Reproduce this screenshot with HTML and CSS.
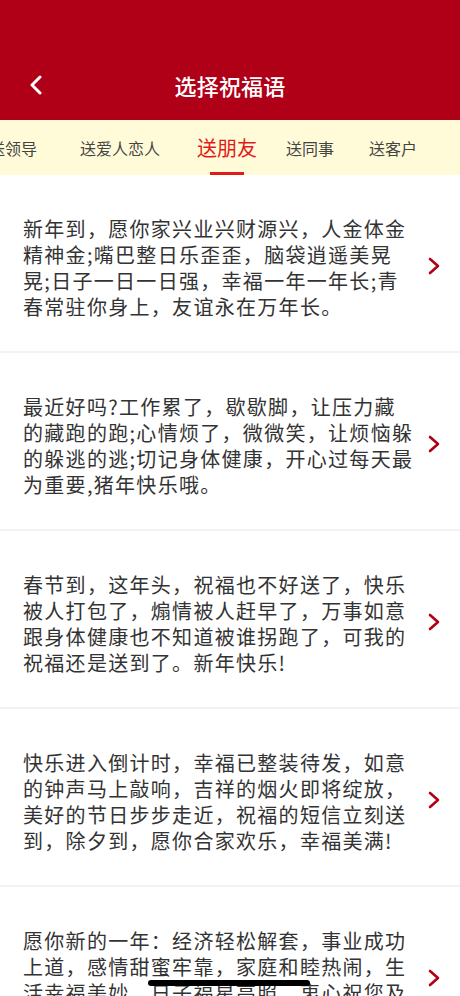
FILE: index.html
```html
<!DOCTYPE html>
<html lang="zh">
<head>
<meta charset="utf-8">
<link rel="stylesheet" href="styles.css">
</head>
<body>
<div class="page">
  <header class="header">
    <div class="nav">
      <svg class="back" width="14" height="20" viewBox="0 0 14 20"><polyline points="11,2 3,10 11,18" fill="none" stroke="#fff" stroke-width="3" stroke-linecap="round" stroke-linejoin="round"/></svg>
      <h1 class="title">选择祝福语</h1>
    </div>
  </header>
  <nav class="tabs">
    <div class="tab-row">
      <span class="tab t1">送领导</span>
      <span class="tab t2">送爱人恋人</span>
      <span class="tab t3 active">送朋友</span>
      <span class="tab t4">送同事</span>
      <span class="tab t5">送客户</span>
    </div>
  </nav>
  <ul class="list">
    <li class="item"><p class="text">新年到，愿你家兴业兴财源兴，人金体金精神金;嘴巴整日乐歪歪，脑袋逍遥美晃晃;日子一日一日强，幸福一年一年长;青春常驻你身上，友谊永在万年长。</p><svg class="chev" width="14" height="18" viewBox="0 0 14 18"><polyline points="3,2 11,9 3,16" fill="none" stroke="#b10016" stroke-width="2.6" stroke-linecap="round" stroke-linejoin="round"/></svg></li>
    <li class="item"><p class="text">最近好吗?工作累了，歇歇脚，让压力藏的藏跑的跑;心情烦了，微微笑，让烦恼躲的躲逃的逃;切记身体健康，开心过每天最为重要,猪年快乐哦。</p><svg class="chev" width="14" height="18" viewBox="0 0 14 18"><polyline points="3,2 11,9 3,16" fill="none" stroke="#b10016" stroke-width="2.6" stroke-linecap="round" stroke-linejoin="round"/></svg></li>
    <li class="item"><p class="text">春节到，这年头，祝福也不好送了，快乐被人打包了，煽情被人赶早了，万事如意跟身体健康也不知道被谁拐跑了，可我的祝福还是送到了。新年快乐!</p><svg class="chev" width="14" height="18" viewBox="0 0 14 18"><polyline points="3,2 11,9 3,16" fill="none" stroke="#b10016" stroke-width="2.6" stroke-linecap="round" stroke-linejoin="round"/></svg></li>
    <li class="item"><p class="text">快乐进入倒计时，幸福已整装待发，如意的钟声马上敲响，吉祥的烟火即将绽放，美好的节日步步走近，祝福的短信立刻送到，除夕到，愿你合家欢乐，幸福美满!</p><svg class="chev" width="14" height="18" viewBox="0 0 14 18"><polyline points="3,2 11,9 3,16" fill="none" stroke="#b10016" stroke-width="2.6" stroke-linecap="round" stroke-linejoin="round"/></svg></li>
    <li class="item"><p class="text">愿你新的一年：经济轻松解套，事业成功上道，感情甜蜜牢靠，家庭和睦热闹，生活幸福美妙，日子福星高照。衷心祝您及家人新年快乐！</p><svg class="chev" width="14" height="18" viewBox="0 0 14 18"><polyline points="3,2 11,9 3,16" fill="none" stroke="#b10016" stroke-width="2.6" stroke-linecap="round" stroke-linejoin="round"/></svg></li>
  </ul>
  <div class="home-indicator"></div>
</div>
</body>
</html>
```

FILE: styles.css
```css
* { box-sizing: border-box; }
html, body { margin: 0; padding: 0; background: #fff; }
body {
  font-family: "Noto Sans CJK SC", "Noto Sans", sans-serif;
  width: 460px;
  height: 996px;
  overflow: hidden;
}
.page { position: relative; width: 460px; height: 996px; overflow: hidden; }
.header {
  background: #b00017;
  height: 120px;
  display: flex;
  flex-direction: column;
  justify-content: flex-end;
}
.nav {
  height: 72px;
  display: flex;
  align-items: center;
  justify-content: center;
  position: relative;
  padding-top: 2px;
}
.back { position: absolute; left: 29px; top: 27px; }
.title {
  margin: 0;
  color: #fff;
  font-size: 22px;
  font-weight: 500;
  letter-spacing: 0.2px;
  line-height: 30px;
}
.tabs {
  background: #fffbd8;
  height: 55px;
  overflow: hidden;
}
.tab-row {
  display: flex;
  align-items: center;
  height: 55px;
  margin-left: -11px;
  white-space: nowrap;
}
.tab {
  font-size: 16px;
  color: #444;
  line-height: 22px;
  position: relative;
}
.t1 { margin-right: 43px; }
.t2 { margin-right: 37px; }
.t3 { margin-right: 29px; }
.t4 { margin-right: 35px; }
.tab.active {
  color: #e21a1a;
  font-size: 20px;
  line-height: 26px;
  height: 55px;
  display: flex;
  align-items: center;
}
.tab.active::after {
  content: "";
  position: absolute;
  left: 13px;
  right: 13px;
  bottom: 0;
  height: 3px;
  background: #e21a1a;
}
.list { list-style: none; margin: 0; padding: 0; }
.item {
  height: 178px;
  border-bottom: 2px solid #f2f2f2;
  display: flex;
  align-items: center;
  padding-left: 23px;
  padding-top: 9px;
}
.text {
  margin: 0;
  width: 393px;
  font-size: 20px;
  line-height: 26px;
  letter-spacing: 1.3px;
  color: #333;
}
.chev { margin-left: 11px; flex-shrink: 0; margin-bottom: 4px; }
.home-indicator {
  position: absolute;
  left: 148px;
  top: 980px;
  width: 162px;
  height: 6px;
  border-radius: 3px;
  background: #000;
}
```
